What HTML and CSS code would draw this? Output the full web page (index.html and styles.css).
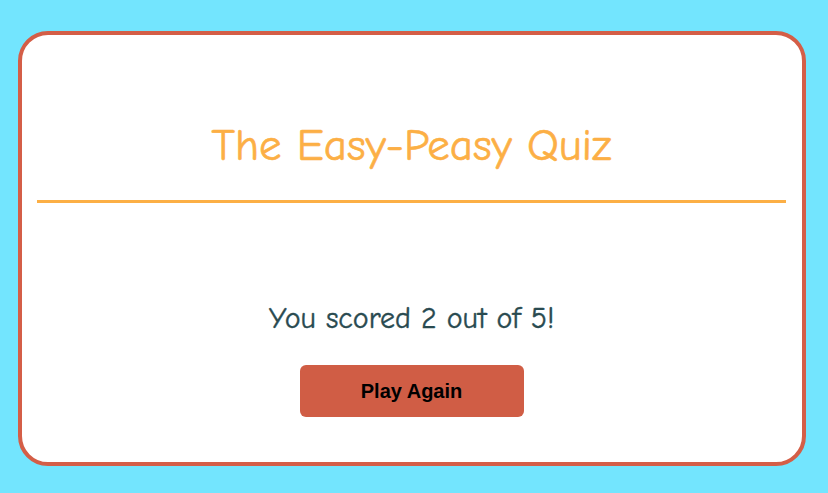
FILE: index.html
```html
<!DOCTYPE html>
<html>
<head>
<meta charset="utf-8">
<link rel="stylesheet" href="styles.css">
</head>
<body>
<main class="card">
  <header class="header">
    <h1 class="title">The Easy-Peasy Quiz</h1>
  </header>
  <section class="result">
    <p class="score">You scored 2 out of 5!</p>
    <button class="btn">Play Again</button>
  </section>
</main>
</body>
</html>
```

FILE: styles.css
```css
html, body {
  margin: 0;
  padding: 0;
}
body {
  background: #73e5fe;
  width: 828px;
  height: 493px;
  overflow: hidden;
  padding-top: 31px;
  box-sizing: border-box;
}
.card {
  margin-left: 18px;
  width: 788px;
  height: 435px;
  box-sizing: border-box;
  background: #fff;
  border: 4px solid #d45e47;
  border-radius: 30px;
  padding: 0 16px 0 15px;
  display: flex;
  flex-direction: column;
}
.header {
  height: 168px;
  border-bottom: 3px solid #fcaf45;
  display: flex;
  align-items: flex-end;
  justify-content: center;
  padding-bottom: 30px;
  box-sizing: border-box;
}
.title {
  margin: 0;
  font-family: "Comic Neue", "Comic Sans MS", "Lato", sans-serif;
  font-weight: 400;
  font-size: 45px;
  line-height: 50px;
  color: #fcaf45;
  -webkit-text-stroke: 0.6px #fcaf45;
}
.result {
  display: flex;
  flex-direction: column;
  align-items: center;
  padding-top: 99px;
}
.score {
  margin: 0;
  font-family: "Comic Neue", "Comic Sans MS", "Lato", sans-serif;
  font-weight: 400;
  font-size: 30px;
  line-height: 34px;
  color: #294a50;
  -webkit-text-stroke: 0.4px #294a50;
}
.btn {
  margin-top: 29px;
  width: 224px;
  height: 52px;
  border: none;
  border-radius: 6px;
  background: #d05d45;
  color: #000;
  font-family: "Liberation Sans", Arial, sans-serif;
  font-weight: 700;
  font-size: 20px;
}
```
